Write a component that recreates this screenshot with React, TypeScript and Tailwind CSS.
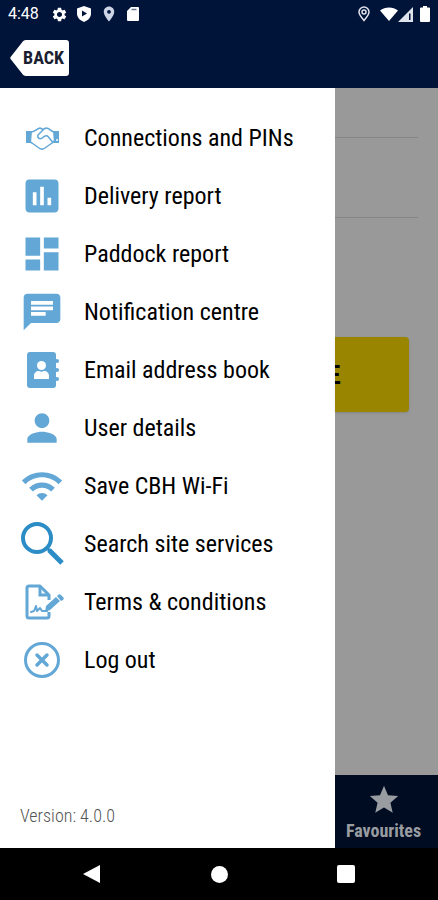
import type { ReactNode } from "react";
import {
  MdAssessment,
  MdChat,
  MdDashboard,
  MdPerson,
  MdPlace,
  MdSettings,
  MdStar,
  MdWifi,
} from "react-icons/md";

type MenuItem = {
  label: string;
  icon: ReactNode;
};

function HandshakeIcon() {
  return (
    <svg width="44" height="44" viewBox="0 0 44 44" fill="none" stroke="currentColor">
      <path d="M6 15h6l-1 12H6z" fill="currentColor" stroke="none" />
      <path d="M39 15h-6l1 12h5z" fill="currentColor" stroke="none" />
      <circle cx="37" cy="24" r="1" fill="#fff" stroke="none" />
      <path
        d="M11 16c4 0 5-3 9-4l3 1.500L26 12c4 0 4 3 8 4M10 26l2 1 7 5c2 1.500 4 1.500 6 0l7-5 2-2"
        strokeWidth="1.5"
        strokeLinejoin="round"
      />
      <path
        d="M23 14l-5 5c-1 4 3 5 6 1.500 2-1 3-1 4 0l5 6"
        strokeWidth="1.5"
        strokeLinejoin="round"
        strokeLinecap="round"
      />
    </svg>
  );
}

function AddressBookIcon() {
  return (
    <svg width="44" height="44" viewBox="0 0 44 44" fill="currentColor">
      <rect x="7" y="4" width="29" height="36" rx="3" />
      <circle cx="37" cy="13" r="2" />
      <circle cx="37" cy="22" r="2" />
      <circle cx="37" cy="31" r="2" />
      <circle cx="21.500" cy="17.500" r="4.500" fill="#fff" />
      <path d="M14 31v-3c0-3 2-5 5-5 2 1 3 1 5 0 3 0 5 2 5 5v3z" fill="#fff" />
    </svg>
  );
}

function SearchIcon() {
  return (
    <svg width="44" height="44" viewBox="0 0 44 44" fill="none" stroke="#2b8cc6">
      <circle cx="17" cy="16" r="14" strokeWidth="4" />
      <path d="M27 26l3 3" strokeWidth="3" />
      <path d="M29 28l13 13" strokeWidth="5" />
    </svg>
  );
}

function SignedDocumentIcon() {
  return (
    <svg width="44" height="44" viewBox="0 0 44 44" fill="none" stroke="currentColor">
      <path
        d="M29 32v4a2 2 0 0 1-2 2H9a2 2 0 0 1-2-2V8a2 2 0 0 1 2-2h11l9 9v5"
        strokeWidth="3"
        strokeLinejoin="round"
      />
      <path d="M20 6v9h9" strokeWidth="3" />
      <path
        d="M11 32l3-1 2-5 1 5 3-3 2 3h5"
        strokeWidth="2"
        strokeLinejoin="round"
        strokeLinecap="round"
      />
      <path d="M25 32l1-6 10-9 4 4-10 9z" fill="currentColor" stroke="none" />
      <path d="M37 16l1-1c1-1 2-1 3 0l2 2c1 1 1 2 0 3l-2 1z" fill="currentColor" stroke="none" />
    </svg>
  );
}

function LogOutIcon() {
  return (
    <svg width="44" height="44" viewBox="0 0 44 44" fill="none" stroke="currentColor">
      <circle cx="22" cy="22" r="16.5" strokeWidth="3" />
      <path d="M17 17l10 10M27 17L17 27" strokeWidth="3.5" strokeLinecap="round" />
    </svg>
  );
}

const menuItems: MenuItem[] = [
  { label: "Connections and PINs", icon: <HandshakeIcon /> },
  { label: "Delivery report", icon: <MdAssessment size={44} /> },
  { label: "Paddock report", icon: <MdDashboard size={44} /> },
  { label: "Notification centre", icon: <MdChat size={44} /> },
  { label: "Email address book", icon: <AddressBookIcon /> },
  { label: "User details", icon: <MdPerson size={44} /> },
  { label: "Save CBH Wi-Fi", icon: <MdWifi size={44} /> },
  { label: "Search site services", icon: <SearchIcon /> },
  { label: "Terms & conditions", icon: <SignedDocumentIcon /> },
  { label: "Log out", icon: <LogOutIcon /> },
];

function StatusBar() {
  return (
    <div className="flex h-7 items-center justify-between px-2 text-white">
      <div className="flex items-center gap-2">
        <span className="font-['Roboto',sans-serif] text-base">4:48</span>
        <div className="flex items-center gap-2 pl-1">
          <MdSettings size={17} />
          <svg width="16" height="18" viewBox="0 0 16 18">
            <path d="M8 1l7 2.500v5c0 4-3 7-7 8.500-4-1.500-7-4.500-7-8.500v-5z" fill="#fff" />
            <path d="M6 5.500v6L11 8.500z" fill="#001338" />
          </svg>
          <MdPlace size={18} className="text-[#cdd5e6]" />
          <svg width="14" height="16" viewBox="0 0 14 16">
            <path d="M5 1h7a1 1 0 0 1 1 1v12a1 1 0 0 1-1 1H2a1 1 0 0 1-1-1V5z" fill="#fff" />
            <path d="M5.500 3.500h5" stroke="#6b7690" strokeWidth="1.5" />
          </svg>
        </div>
      </div>
      <div className="flex items-center">
        <svg width="12" height="16" viewBox="0 0 12 16" fill="none" stroke="#dfe3ec">
          <path d="M6 14.500C3 11 1 8.500 1 6a5 5 0 0 1 10 0c0 2.500-2 5-5 8.500z" strokeWidth="1.5" />
          <circle cx="6" cy="6" r="2" strokeWidth="1.5" />
        </svg>
        <svg width="18" height="14" viewBox="0 0 18 14" className="ml-2.5">
          <path d="M0 3.500C5-.5 13-.5 18 3.500L9 14z" fill="#fff" />
        </svg>
        <svg width="16" height="15" viewBox="0 0 16 15">
          <path d="M0 15L15 0v15z" fill="#dfe3ec" />
          <path d="M11 6.500h1.500V13H11z" fill="#001338" />
        </svg>
        <svg width="10" height="16" viewBox="0 0 10 16" className="ml-1.5">
          <path
            d="M3 0h4v1.500h2a1 1 0 0 1 1 1V15a1 1 0 0 1-1 1H1a1 1 0 0 1-1-1V2.500a1 1 0 0 1 1-1h2z"
            fill="#fff"
          />
        </svg>
      </div>
    </div>
  );
}

function BackButton() {
  return (
    <button type="button" className="relative flex h-9 w-[60px] items-center justify-end pr-1.5">
      <svg className="absolute inset-0" width="60" height="36" viewBox="0 0 60 36">
        <path
          d="M1 16.500L12 2.500C13 1 14 0 16 0h40a3 3 0 0 1 3 3v30a3 3 0 0 1-3 3H16c-2 0-3-1-4-2.500L1 19.500c-1-1-1-2 0-3z"
          fill="#fff"
        />
      </svg>
      <span className="relative text-lg font-bold text-[#1a2030]">BACK</span>
    </button>
  );
}

function Drawer() {
  return (
    <aside className="flex w-[76.5%] shrink-0 flex-col justify-between bg-white">
      <nav className="pt-[21px]">
        <ul>
          {menuItems.map((item) => (
            <li key={item.label}>
              <a href="#" className="flex h-[58px] items-center gap-5 pl-5 text-black">
                <span className="w-11 shrink-0 text-[#62a7d6]">{item.icon}</span>
                <span className="text-2xl whitespace-nowrap">{item.label}</span>
              </a>
            </li>
          ))}
        </ul>
      </nav>
      <p className="pb-5 pl-5 text-lg leading-6 font-light text-[#555]">Version: 4.0.0</p>
    </aside>
  );
}

// The part of the screen behind the drawer, already dimmed
function DimmedScreen() {
  return (
    <main className="flex min-w-0 flex-1 flex-col justify-between bg-[#999]">
      <div>
        <div className="mr-5 h-[50px] border-b border-[#858585]" />
        <div className="mr-5 h-20 border-b border-[#858585]" />
        <button
          type="button"
          className="mt-[119px] flex h-[75px] w-[74px] items-center rounded-r bg-[#998500] shadow"
        >
          <span className="flex w-1.5 justify-end overflow-hidden font-['Liberation_Sans',sans-serif] text-[28px] font-bold text-black">
            E
          </span>
        </button>
      </div>
      <a
        href="#"
        className="flex h-[73px] flex-col items-center justify-center bg-[#000c22] pt-1 pr-1.5 text-[#999ca1]"
      >
        <MdStar size={34} />
        <span className="text-lg font-bold">Favourites</span>
      </a>
    </main>
  );
}

function SystemNav() {
  return (
    <footer className="flex h-[52px] items-center justify-between bg-black px-[83px]">
      <button type="button" aria-label="Back">
        <svg width="18" height="18" viewBox="0 0 18 18">
          <path d="M17 0v18L0 9z" fill="#fff" />
        </svg>
      </button>
      <button type="button" aria-label="Home" className="size-[17px] rounded-full bg-white" />
      <button type="button" aria-label="Recent apps" className="size-[18px] rounded-xs bg-white" />
    </footer>
  );
}

export default function App() {
  return (
    <div className="flex min-h-screen flex-col bg-black font-['Roboto_Condensed','Liberation_Sans_Narrow','Arial_Narrow','Liberation_Sans',sans-serif]">
      <header className="bg-[#001338] pb-3">
        <StatusBar />
        <div className="pt-3 pl-2.5">
          <BackButton />
        </div>
      </header>
      <div className="flex flex-1">
        <Drawer />
        <DimmedScreen />
      </div>
      <SystemNav />
    </div>
  );
}
